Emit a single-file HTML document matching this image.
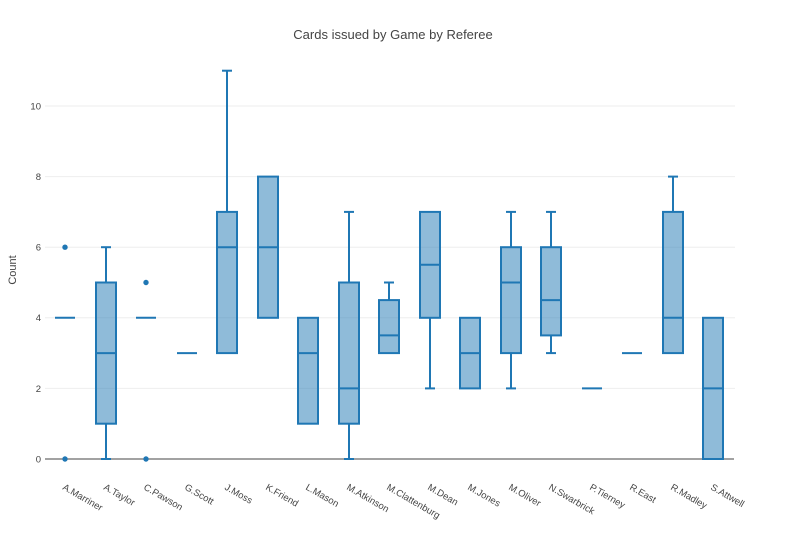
<!DOCTYPE html><html><head><style>body{margin:0;background:#fff}svg{display:block;font-family:"Liberation Sans",sans-serif}</style></head><body>
<svg width="800" height="555" xmlns="http://www.w3.org/2000/svg">
<text x="393" y="39" font-size="13" fill="#444" text-anchor="middle">Cards issued by Game by Referee</text>
<text transform="translate(16,270) rotate(-90)" font-size="11" fill="#444" text-anchor="middle">Count</text>
<g stroke="#eee" stroke-width="1">
<line x1="45" x2="735" y1="388.4" y2="388.4"/><line x1="45" x2="735" y1="317.8" y2="317.8"/><line x1="45" x2="735" y1="247.2" y2="247.2"/><line x1="45" x2="735" y1="176.6" y2="176.6"/><line x1="45" x2="735" y1="106" y2="106"/></g>
<g font-size="9.5" fill="#444" text-anchor="end">
<text x="41" y="462.5">0</text><text x="41" y="392">2</text><text x="41" y="321">4</text><text x="41" y="250.5">6</text><text x="41" y="180">8</text><text x="41" y="109.5">10</text></g>
<line x1="45" x2="734" y1="459" y2="459" stroke="#444" stroke-width="1"/>
<g stroke="#1f77b4" stroke-width="2" fill="rgba(31,119,180,0.5)">
<line x1="55" x2="75" y1="317.8" y2="317.8"/>
<line x1="106" x2="106" y1="459" y2="423.7"/><line x1="106" x2="106" y1="282.5" y2="247.2"/><line x1="101" x2="111" y1="247.2" y2="247.2"/><line x1="101" x2="111" y1="459" y2="459"/><rect x="96" y="282.5" width="20" height="141.2"/><line x1="96" x2="116" y1="353.1" y2="353.1"/>
<line x1="136" x2="156" y1="317.8" y2="317.8"/>
<line x1="177" x2="197" y1="353.1" y2="353.1"/>
<line x1="227" x2="227" y1="211.9" y2="70.7"/><line x1="222" x2="232" y1="70.7" y2="70.7"/><rect x="217" y="211.9" width="20" height="141.2"/><line x1="217" x2="237" y1="247.2" y2="247.2"/>
<rect x="258" y="176.6" width="20" height="141.2"/><line x1="258" x2="278" y1="247.2" y2="247.2"/>
<rect x="298" y="317.8" width="20" height="105.9"/><line x1="298" x2="318" y1="353.1" y2="353.1"/>
<line x1="349" x2="349" y1="459" y2="423.7"/><line x1="349" x2="349" y1="282.5" y2="211.9"/><line x1="344" x2="354" y1="211.9" y2="211.9"/><line x1="344" x2="354" y1="459" y2="459"/><rect x="339" y="282.5" width="20" height="141.2"/><line x1="339" x2="359" y1="388.4" y2="388.4"/>
<line x1="389" x2="389" y1="300.1" y2="282.5"/><line x1="384" x2="394" y1="282.5" y2="282.5"/><rect x="379" y="300.1" width="20" height="53"/><line x1="379" x2="399" y1="335.4" y2="335.4"/>
<line x1="430" x2="430" y1="388.4" y2="317.8"/><line x1="425" x2="435" y1="388.4" y2="388.4"/><rect x="420" y="211.9" width="20" height="105.9"/><line x1="420" x2="440" y1="264.8" y2="264.8"/>
<rect x="460" y="317.8" width="20" height="70.6"/><line x1="460" x2="480" y1="353.1" y2="353.1"/>
<line x1="511" x2="511" y1="388.4" y2="353.1"/><line x1="511" x2="511" y1="247.2" y2="211.9"/><line x1="506" x2="516" y1="388.4" y2="388.4"/><line x1="506" x2="516" y1="211.9" y2="211.9"/><rect x="501" y="247.2" width="20" height="105.9"/><line x1="501" x2="521" y1="282.5" y2="282.5"/>
<line x1="551" x2="551" y1="353.1" y2="335.4"/><line x1="551" x2="551" y1="247.2" y2="211.9"/><line x1="546" x2="556" y1="353.1" y2="353.1"/><line x1="546" x2="556" y1="211.9" y2="211.9"/><rect x="541" y="247.2" width="20" height="88.2"/><line x1="541" x2="561" y1="300.1" y2="300.1"/>
<line x1="582" x2="602" y1="388.4" y2="388.4"/>
<line x1="622" x2="642" y1="353.1" y2="353.1"/>
<line x1="673" x2="673" y1="211.9" y2="176.6"/><line x1="668" x2="678" y1="176.6" y2="176.6"/><rect x="663" y="211.9" width="20" height="141.2"/><line x1="663" x2="683" y1="317.8" y2="317.8"/>
<rect x="703" y="317.8" width="20" height="141.2"/><line x1="703" x2="723" y1="388.4" y2="388.4"/>
</g>
<g fill="#1f77b4"><circle cx="65" cy="247.2" r="2.7"/><circle cx="65" cy="459" r="2.7"/><circle cx="146" cy="282.5" r="2.7"/><circle cx="146" cy="459" r="2.7"/></g>
<g font-size="9.5" fill="#444">
<text transform="translate(62,489) rotate(30)">A.Marriner</text>
<text transform="translate(103,489) rotate(30)">A.Taylor</text>
<text transform="translate(143,489) rotate(30)">C.Pawson</text>
<text transform="translate(184,489) rotate(30)">G.Scott</text>
<text transform="translate(224,489) rotate(30)">J.Moss</text>
<text transform="translate(265,489) rotate(30)">K.Friend</text>
<text transform="translate(305,489) rotate(30)">L.Mason</text>
<text transform="translate(346,489) rotate(30)">M.Atkinson</text>
<text transform="translate(386,489) rotate(30)">M.Clattenburg</text>
<text transform="translate(427,489) rotate(30)">M.Dean</text>
<text transform="translate(467,489) rotate(30)">M.Jones</text>
<text transform="translate(508,489) rotate(30)">M.Oliver</text>
<text transform="translate(548,489) rotate(30)">N.Swarbrick</text>
<text transform="translate(589,489) rotate(30)">P.Tierney</text>
<text transform="translate(629,489) rotate(30)">R.East</text>
<text transform="translate(670,489) rotate(30)">R.Madley</text>
<text transform="translate(710,489) rotate(30)">S.Attwell</text>
</g>
</svg></body></html>
